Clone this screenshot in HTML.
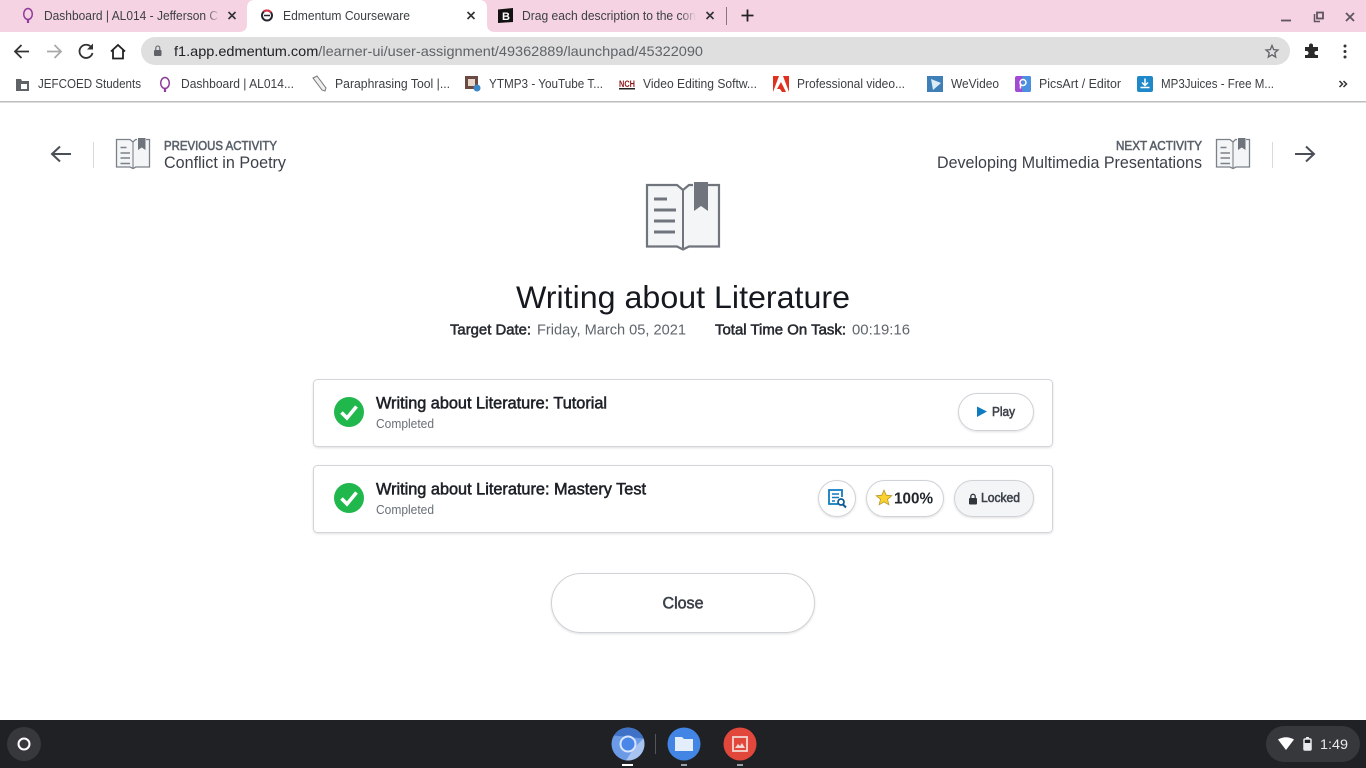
<!DOCTYPE html>
<html><head><meta charset="utf-8"><title>Edmentum Courseware</title>
<style>
html,body{margin:0;padding:0;background:#fff;width:1366px;height:768px;overflow:hidden}
svg{display:block;position:absolute;left:0;top:0}
text{font-family:"Liberation Sans",sans-serif}
.m{stroke-width:.55px;paint-order:stroke}
</style></head><body>
<svg width="1366" height="768" viewBox="0 0 1366 768" xmlns="http://www.w3.org/2000/svg">
<defs>
<linearGradient id="f1"><stop offset="0" stop-color="#f5d3e3" stop-opacity="0"/><stop offset="1" stop-color="#f5d3e3"/></linearGradient>
<g id="smallbook">
  <path d="M22 2.500H20.500L18 5L15 2.500H1.500V30H15L18 31.500L21 30H34.500V2.500H31" fill="#f3f5f7" stroke="#7c8189" stroke-width="1.300"/>
  <path d="M18 5V31" stroke="#7c8189" stroke-width="1.100"/>
  <path d="M23 1H30.500V13L26.700 10.500L23 13Z" fill="#70757d"/>
  <path d="M5.500 10.500H11.500M5.500 16H15M5.500 21H15M5.500 26.500H15" stroke="#7c8189" stroke-width="1.500"/>
</g>
<g id="check">
  <circle cx="15" cy="15" r="15" fill="#20b84c"/>
  <path d="M7.500 15.500L13 21L22.500 9.500" fill="none" stroke="#fff" stroke-width="3.600"/>
</g>
<filter id="sh" x="-5%" y="-20%" width="110%" height="140%"><feDropShadow dx="0" dy="1" stdDeviation="1" flood-color="#000" flood-opacity=".12"/></filter>
</defs>

<!-- Tab strip -->
<rect width="1366" height="32" fill="#f5d3e3"/>
<path d="M239 32Q247 32 247 24V8Q247 0 255 0H479Q487 0 487 8V24Q487 32 495 32Z" fill="#fff"/>
<!-- tab 1 -->
<ellipse cx="28" cy="14" rx="4.300" ry="5.500" fill="none" stroke="#8e3b9b" stroke-width="1.500"/>
<path d="M28 19.500V23" stroke="#8e3b9b" stroke-width="2.200"/>
<text x="44" y="20" font-size="12.500" fill="#3c4043" textLength="174" lengthAdjust="spacingAndGlyphs">Dashboard | AL014 - Jefferson C</text>
<rect x="206" y="6" width="14" height="20" fill="url(#f1)"/>
<path d="M228.500 12L235.500 19M235.500 12L228.500 19" stroke="#333" stroke-width="1.600"/>
<!-- tab 2 -->
<circle cx="267" cy="15.500" r="5" fill="#fff" stroke="#26262e" stroke-width="2"/>
<path d="M264 15.500H270" stroke="#26262e" stroke-width="1.500"/>
<path d="M271 12.500A5.500 5.500 0 0 0 263.500 11.500" stroke="#d8344a" stroke-width="2" fill="none"/>
<text x="283" y="20" font-size="12.500" fill="#3c4043" textLength="127" lengthAdjust="spacingAndGlyphs">Edmentum Courseware</text>
<path d="M467.500 12L474.500 19M474.500 12L467.500 19" stroke="#333" stroke-width="1.600"/>
<!-- tab 3 -->
<path d="M498 9.500L513 8V22L498 23Z" fill="#111"/>
<text x="502" y="20" font-size="11" font-weight="bold" fill="#fff">B</text>
<text x="522" y="20" font-size="12.500" fill="#3c4043" textLength="174" lengthAdjust="spacingAndGlyphs">Drag each description to the con</text>
<rect x="680" y="6" width="16" height="20" fill="url(#f1)"/>
<path d="M706.500 12L713.500 19M713.500 12L706.500 19" stroke="#333" stroke-width="1.600"/>
<rect x="726" y="7" width="1" height="18" fill="#85757d"/>
<path d="M747.500 9.500V21.500M741.500 15.500H753.500" stroke="#222" stroke-width="1.800"/>
<!-- window controls -->
<path d="M1281 20.500H1291" stroke="#5f5560" stroke-width="1.800"/>
<path d="M1314.500 14V21.500H1320" fill="none" stroke="#5f5560" stroke-width="1.500"/>
<rect x="1317" y="12.500" width="6" height="6" fill="none" stroke="#5f5560" stroke-width="1.800"/>
<path d="M1346 13L1354 21M1354 13L1346 21" stroke="#5f5560" stroke-width="1.800"/>

<!-- Toolbar -->
<path d="M29 51.500H15.500M21.500 45L15 51.500L21.500 58" fill="none" stroke="#333" stroke-width="1.800"/>
<path d="M47 51.500H60.500M54.500 45L61 51.500L54.500 58" fill="none" stroke="#a9a9a9" stroke-width="1.800"/>
<path d="M91.500 47.500A6.600 6.600 0 1 0 92.500 53" fill="none" stroke="#333" stroke-width="1.800"/>
<path d="M93 43.500V49.500H87Z" fill="#333"/>
<path d="M111 51.500L118 45L125 51.500M113 50V58.500H123V50" fill="none" stroke="#222" stroke-width="1.800"/>
<rect x="141" y="37" width="1149" height="28" rx="14" fill="#dfdfdf"/>
<rect x="154" y="50" width="7.500" height="6" rx="1" fill="#5f6368"/>
<path d="M155.800 50V48a2 2 0 0 1 4 0V50" fill="none" stroke="#5f6368" stroke-width="1.100"/>
<text x="174" y="56" font-size="14" textLength="529" lengthAdjust="spacingAndGlyphs" fill="#5f6368"><tspan fill="#202124">f1.app.edmentum.com</tspan>/learner-ui/user-assignment/49362889/launchpad/45322090</text>
<path d="M1272 45.500L1273.700 49.600L1278 50L1274.800 52.800L1275.700 57.100L1272 54.800L1268.300 57.100L1269.200 52.800L1266 50L1270.300 49.600Z" fill="none" stroke="#5f6368" stroke-width="1.300"/>
<path d="M1305 47H1309V45.500a2 2 0 0 1 4 0V47H1318V51H1316.500a2 2 0 0 0 0 4H1318V58H1305V55H1306.500a2 2 0 0 0 0-4H1305Z" fill="#2b2b2b"/>
<circle cx="1345" cy="46" r="1.500" fill="#333"/><circle cx="1345" cy="51.500" r="1.500" fill="#333"/><circle cx="1345" cy="57" r="1.500" fill="#333"/>

<!-- Bookmarks -->
<path d="M16 79H21L22 81H29V91H16Z" fill="#5f6368"/>
<rect x="21" y="84" width="6" height="5" fill="#fff"/>
<text x="38" y="88" font-size="12.500" fill="#3c4043" textLength="103" lengthAdjust="spacingAndGlyphs">JEFCOED Students</text>
<ellipse cx="165" cy="83" rx="4.300" ry="5.500" fill="none" stroke="#8e3b9b" stroke-width="1.500"/>
<path d="M165 88.500V92" stroke="#8e3b9b" stroke-width="2.200"/>
<text x="181" y="88" font-size="12.500" fill="#3c4043" textLength="113" lengthAdjust="spacingAndGlyphs">Dashboard | AL014...</text>
<path d="M313 78L317 76L326 88L325 91L322 90Z" fill="#eee" stroke="#777" stroke-width="1"/>
<text x="335" y="88" font-size="12.500" fill="#3c4043" textLength="115" lengthAdjust="spacingAndGlyphs">Paraphrasing Tool |...</text>
<rect x="465" y="76" width="13" height="13" fill="#6b4a44"/>
<rect x="468" y="79" width="7" height="7" fill="#e8d6cb"/>
<circle cx="477" cy="88" r="3.500" fill="#3b86c4"/>
<text x="489" y="88" font-size="12.500" fill="#3c4043" textLength="114" lengthAdjust="spacingAndGlyphs">YTMP3 - YouTube T...</text>
<text x="619" y="87" font-size="9" font-weight="bold" fill="#8a1818" textLength="16" lengthAdjust="spacingAndGlyphs">NCH</text>
<rect x="619" y="88" width="16" height="1.500" fill="#222"/>
<text x="643" y="88" font-size="12.500" fill="#3c4043" textLength="114" lengthAdjust="spacingAndGlyphs">Video Editing Softw...</text>
<path d="M773 76H779L773 92ZM783 76H789V92ZM781 82L786 92H782L780 89H777Z" fill="#e0301e"/>
<text x="797" y="88" font-size="12.500" fill="#3c4043" textLength="108" lengthAdjust="spacingAndGlyphs">Professional video...</text>
<rect x="927" y="76" width="16" height="16" fill="#3f7fb8"/>
<path d="M931 79L941 83L933 90Z" fill="#dcecf7"/>
<text x="951" y="88" font-size="12.500" fill="#3c4043" textLength="48" lengthAdjust="spacingAndGlyphs">WeVideo</text>
<rect x="1015" y="76" width="16" height="16" rx="2" fill="#a14ad6"/>
<rect x="1022" y="76" width="9" height="16" rx="2" fill="#4a8fe0"/>
<circle cx="1023" cy="82.500" r="3" fill="none" stroke="#fff" stroke-width="1.500"/>
<path d="M1020.500 83V88.500" stroke="#fff" stroke-width="1.500"/>
<text x="1039" y="88" font-size="12.500" fill="#3c4043" textLength="82" lengthAdjust="spacingAndGlyphs">PicsArt / Editor</text>
<rect x="1137" y="76" width="16" height="16" rx="2" fill="#1f88c9"/>
<path d="M1145 78.500V85M1142 82.500L1145 85.500L1148 82.500M1140.500 87.500H1149.500" fill="none" stroke="#fff" stroke-width="1.500"/>
<text x="1161" y="88" font-size="12.500" fill="#3c4043" textLength="113" lengthAdjust="spacingAndGlyphs">MP3Juices - Free M...</text>
<path d="M1339.500 81L1342.500 84L1339.500 87M1343.500 81L1346.500 84L1343.500 87" fill="none" stroke="#333" stroke-width="1.500"/>
<rect y="101" width="1366" height="1.500" fill="#bdbdbd"/>

<!-- Activity nav -->
<path d="M71 154H52M60 146.500L52 154L60 161.500" fill="none" stroke="#4a4f57" stroke-width="2"/>
<rect x="93" y="142" width="1" height="26" fill="#d9dbde"/>
<use href="#smallbook" x="115" y="137"/>
<text class="m" x="164" y="150" font-size="12.500" fill="#59606a" stroke="#59606a" textLength="113" lengthAdjust="spacingAndGlyphs">PREVIOUS ACTIVITY</text>
<text x="164" y="168" font-size="16.500" fill="#3c4149" textLength="122" lengthAdjust="spacingAndGlyphs">Conflict in Poetry</text>

<text class="m" x="1116" y="150" font-size="12.500" fill="#59606a" stroke="#59606a" textLength="86" lengthAdjust="spacingAndGlyphs">NEXT ACTIVITY</text>
<text x="937" y="168" font-size="16.500" fill="#3c4149" textLength="265" lengthAdjust="spacingAndGlyphs">Developing Multimedia Presentations</text>
<use href="#smallbook" x="1215" y="137"/>
<rect x="1272" y="142" width="1" height="26" fill="#d9dbde"/>
<path d="M1295 154H1314M1306 146.500L1314 154L1306 161.500" fill="none" stroke="#4a4f57" stroke-width="2"/>

<!-- Large book -->
<path d="M693 185H689L683 190L677 185H647V246.500H677L683 249.500L689 246.500H719V185H708" fill="#f3f5f7" stroke="#70757d" stroke-width="2.200"/>
<path d="M683 190V248" stroke="#70757d" stroke-width="2"/>
<path d="M694 182H708V211L701 206L694 211Z" fill="#70757d"/>
<path d="M654 199H667M654 210H676M654 221H675M654 232H675" stroke="#70757d" stroke-width="3"/>

<!-- Title -->
<text x="516" y="308" font-size="31.500" fill="#15191f" textLength="334" lengthAdjust="spacingAndGlyphs">Writing about Literature</text>
<text class="m" x="450" y="334.500" font-size="15" fill="#272b31" stroke="#272b31" textLength="81" lengthAdjust="spacingAndGlyphs">Target Date:</text>
<text x="537" y="334.500" font-size="15" fill="#5f656d" textLength="149" lengthAdjust="spacingAndGlyphs">Friday, March 05, 2021</text>
<text class="m" x="715" y="334.500" font-size="15" fill="#272b31" stroke="#272b31" textLength="131" lengthAdjust="spacingAndGlyphs">Total Time On Task:</text>
<text x="852" y="334.500" font-size="15" fill="#5f656d" textLength="58" lengthAdjust="spacingAndGlyphs">00:19:16</text>

<!-- Card 1 -->
<rect x="313.500" y="379.500" width="739" height="67" rx="4" fill="#fff" stroke="#d2d5d9" filter="url(#sh)"/>
<use href="#check" x="334" y="397"/>
<text class="m" x="376" y="408.500" font-size="16.500" fill="#1d2127" stroke="#1d2127" textLength="231" lengthAdjust="spacingAndGlyphs">Writing about Literature: Tutorial</text>
<text x="376" y="428" font-size="12.500" fill="#6a7078" textLength="58" lengthAdjust="spacingAndGlyphs">Completed</text>
<rect x="958.500" y="393.500" width="75" height="37" rx="18.500" fill="#fff" stroke="#cfd2d6" filter="url(#sh)"/>
<path d="M977 406.500L987 411.500L977 417Z" fill="#0f7cc0"/>
<text class="m" x="992" y="416" font-size="12.500" fill="#3c4149" stroke="#3c4149" textLength="23" lengthAdjust="spacingAndGlyphs">Play</text>

<!-- Card 2 -->
<rect x="313.500" y="465.500" width="739" height="67" rx="4" fill="#fff" stroke="#d2d5d9" filter="url(#sh)"/>
<use href="#check" x="334" y="483"/>
<text class="m" x="376" y="494.500" font-size="16.500" fill="#1d2127" stroke="#1d2127" textLength="270" lengthAdjust="spacingAndGlyphs">Writing about Literature: Mastery Test</text>
<text x="376" y="514" font-size="12.500" fill="#6a7078" textLength="58" lengthAdjust="spacingAndGlyphs">Completed</text>
<rect x="818.500" y="480.500" width="37" height="36" rx="18" fill="#fff" stroke="#cfd2d6" filter="url(#sh)"/>
<path d="M838 504H829V490H842V497" fill="none" stroke="#0f7cc0" stroke-width="1.800"/>
<path d="M832 494H839M832 497.500H839M832 501H835" stroke="#0f7cc0" stroke-width="1.400"/>
<circle cx="841" cy="502" r="3" fill="none" stroke="#0a5a94" stroke-width="1.700"/>
<path d="M843 504.500L846 507.500" stroke="#0a5a94" stroke-width="2"/>
<rect x="866.500" y="480.500" width="77" height="36" rx="18" fill="#fff" stroke="#cfd2d6" filter="url(#sh)"/>
<path d="M884 490L886.200 495.200L891.800 495.700L887.500 499.300L888.900 504.800L884 501.900L879.100 504.800L880.500 499.300L876.200 495.700L881.800 495.200Z" fill="#fcd22e" stroke="#b59a2c" stroke-width=".8"/>
<text x="894" y="503.500" font-size="16" font-weight="bold" fill="#23272d" textLength="39" lengthAdjust="spacingAndGlyphs">100%</text>
<rect x="954.500" y="480.500" width="79" height="36" rx="18" fill="#f3f5f7" stroke="#cfd2d6" filter="url(#sh)"/>
<rect x="969" y="498" width="8" height="6.500" rx="1" fill="#32363c"/>
<path d="M970.800 498V496.500a2.200 2.200 0 0 1 4.400 0V498" fill="none" stroke="#32363c" stroke-width="1.300"/>
<text class="m" x="981" y="502" font-size="12.500" fill="#3c4149" stroke="#3c4149" textLength="39" lengthAdjust="spacingAndGlyphs">Locked</text>

<!-- Close -->
<rect x="551.500" y="573.500" width="263" height="59" rx="29.500" fill="#fff" stroke="#cfd2d6" filter="url(#sh)"/>
<text class="m" x="662.500" y="608.500" font-size="16.500" fill="#3c4149" stroke="#3c4149" textLength="41" lengthAdjust="spacingAndGlyphs">Close</text>

<!-- Shelf -->
<rect y="720" width="1366" height="48" fill="#202124"/>
<circle cx="24" cy="744" r="17" fill="#37383b"/>
<circle cx="24" cy="744" r="5.500" fill="none" stroke="#fff" stroke-width="2"/>
<circle cx="628" cy="744" r="16.500" fill="#6b9ae6"/>
<path d="M614 735.500A16.500 16.500 0 0 1 643.500 738.500L628 737Z" fill="#3f72c6"/>
<path d="M643.500 738.500A16.500 16.500 0 0 1 626 760.400L634 748Z" fill="#a8c3f0"/>
<circle cx="628" cy="744" r="7.500" fill="#4a85e8" stroke="#d8e5fb" stroke-width="2"/>
<rect x="622" y="764" width="11" height="2" fill="#fff"/>
<rect x="655" y="734" width="1" height="20" fill="#55565a"/>
<circle cx="684" cy="744" r="16.500" fill="#4285e4"/>
<path d="M675 737H682L684 739H693V751H675Z" fill="#e4eefb"/>
<rect x="681" y="764" width="6" height="2" fill="#9aa0a6"/>
<circle cx="740" cy="744" r="16.500" fill="#e2473b"/>
<rect x="733" y="737" width="14" height="14" fill="none" stroke="#f4d6d3" stroke-width="1.800"/>
<path d="M735 748L738 744L740 746L742 743L745 748Z" fill="#f4d6d3"/>
<rect x="737" y="764" width="6" height="2" fill="#9aa0a6"/>
<rect x="1266" y="726" width="94" height="36" rx="18" fill="#37383b"/>
<path d="M1278 739.500Q1286 735 1294 739.500L1286 750Z" fill="#fff"/>
<rect x="1304" y="739" width="7" height="11" rx="1" fill="#202124" stroke="#e8eaed" stroke-width="1.500"/>
<rect x="1304.500" y="743" width="6" height="7" fill="#e8eaed"/>
<rect x="1306" y="737" width="3" height="2" fill="#e8eaed"/>
<text x="1320" y="749" font-size="13.500" fill="#e8eaed" textLength="28" lengthAdjust="spacingAndGlyphs">1:49</text>
</svg>
</body></html>
